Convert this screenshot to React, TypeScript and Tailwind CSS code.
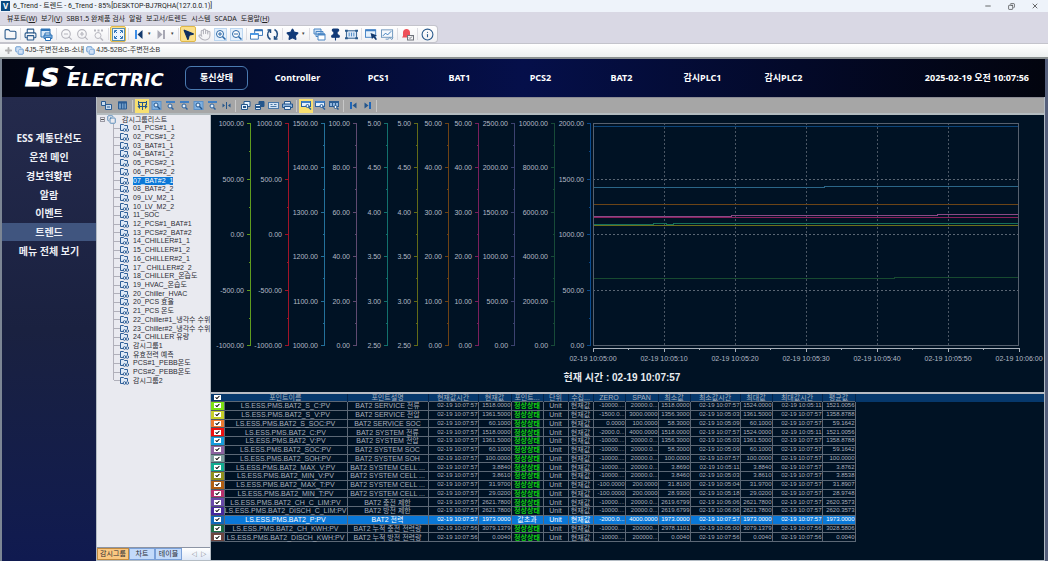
import { Fragment } from "react";
import type { ComponentType } from "react";
import {
  Folder,
  Printer,
  ZoomIn,
  ZoomOut,
  MousePointer2,
  Hand,
  Star,
  Pin,
  Info,
  Check,
  Copy,
  Minus,
  X,
  Plus,
} from "lucide-react";

type IconProps = { className?: string; strokeWidth?: number };

type Tool = {
  icon?: ComponentType<IconProps>;
  label: string;
  color?: string;
  active?: boolean;
  kind?: "sep" | "drop";
};

const ScreenPrintIcon = ({ className }: IconProps) => (
  <svg viewBox="0 0 13 13" className={className} fill="none" stroke="#2f74b8">
    <path d="M1 1h9v8H1z" fill="#d8e8f8" />
    <path d="M1 2h9" strokeWidth="2" />
    <path d="M5 7V5h5v2" fill="#fff" />
    <path d="M4 7h8v3.5H4z" fill="#7fb0e0" />
    <path d="M5.500 9.500h5v3h-5z" fill="#fff" />
  </svg>
);

const PanZoomIcon = ({ className }: IconProps) => (
  <svg viewBox="0 0 13 13" className={className} fill="none" stroke="#b8b8c0">
    <path d="M2 2.500h2M5.500 2.500h2M9 2.500h2" strokeWidth="2" />
    <circle cx="6" cy="7.500" r="3" />
    <path d="M8.500 10l2.500 2.500" strokeWidth="1.500" />
  </svg>
);

const FitIcon = ({ className }: IconProps) => (
  <svg viewBox="0 0 13 13" className={className} fill="none" stroke="#2f74b8">
    <rect x="0.500" y="0.500" width="12" height="12" fill="#eef6ff" stroke="#5a90b0" />
    <path d="M2.500 5V2.500H5M8 2.500h2.500V5M10.500 8v2.500H8M5 10.500H2.500V8M3 3l2 2M10 3L8 5M10 10L8 8M3 10l2-2" />
  </svg>
);

const BackIcon = ({ className }: IconProps) => (
  <svg viewBox="0 0 13 13" className={className}>
    <path d="M3 2h2v9H3z" fill="#3f8fe8" />
    <path d="M10.500 2v9L5.500 6.500z" fill="#12386c" />
  </svg>
);

const ForwardIcon = ({ className }: IconProps) => (
  <svg viewBox="0 0 13 13" className={className} fill="currentColor">
    <path d="M8 2h2v9H8z" />
    <path d="M2.500 2v9L7.500 6.500z" />
  </svg>
);

const ZoomInBoxIcon = ({ className }: IconProps) => (
  <svg viewBox="0 0 13 13" className={className} fill="none" stroke="#2a68a8">
    <rect x="0.500" y="0.500" width="12" height="12" fill="#e4f0fc" stroke="#bcd6f0" />
    <circle cx="6" cy="6" r="3.500" fill="#fff" />
    <path d="M8.500 8.500l3 3" strokeWidth="1.500" />
    <path d="M4 6h4M6 4v4" />
  </svg>
);

const ZoomOutBoxIcon = ({ className }: IconProps) => (
  <svg viewBox="0 0 13 13" className={className} fill="none" stroke="#2a68a8">
    <rect x="0.500" y="0.500" width="12" height="12" fill="#e4f0fc" stroke="#bcd6f0" />
    <circle cx="6" cy="6" r="3.500" fill="#fff" />
    <path d="M8.500 8.500l3 3" strokeWidth="1.500" />
    <path d="M4 6h4" />
  </svg>
);

const CascadeIcon = ({ className }: IconProps) => (
  <svg viewBox="0 0 14 13" className={className} fill="#fff" stroke="#2f6fb4">
    <path d="M5 1.500h8.500v6H5z" />
    <path d="M5 2h8.500" strokeWidth="2" />
    <path d="M0.500 5.500H9v6H.5z" />
    <path d="M.5 6H9" strokeWidth="2" stroke="#4a9ae8" />
  </svg>
);

const CycleIcon = ({ className }: IconProps) => (
  <svg viewBox="0 0 13 13" className={className} fill="none" stroke="#1f4c80" strokeWidth="1.500">
    <path d="M4.500 11.500C1 9.500.5 5 4 2M8.500 1.500C12 3.500 12.500 8 9 11" />
    <path d="M1.500 2H4.500v3M11.500 11h-3V8" />
  </svg>
);

const StackIcon = ({ className }: IconProps) => (
  <svg viewBox="0 0 13 13" className={className} fill="#cfe2f6" stroke="#4a86c4">
    <path d="M1 1h7v5H1zM3 3.500h7v5H3z" />
    <path d="M5 6h7v6H5z" fill="#fff" />
    <path d="M5 6.500h7" strokeWidth="2" />
  </svg>
);

const FrameIcon = ({ className }: IconProps) => (
  <svg viewBox="0 0 14 13" className={className} fill="none" stroke="#2a5a8c">
    <rect x="1.500" y="2.500" width="11" height="8" fill="#dbe8f6" />
    <path d="M4.500 4.500v4M7 4.500v4M9.500 4.500v4" stroke="#4a86c4" />
    <path d="M0 2.500h3M11 2.500h3M0 10.500h3M11 10.500h3" strokeWidth="2" />
  </svg>
);

const ScreenCursorIcon = ({ className }: IconProps) => (
  <svg viewBox="0 0 14 13" className={className} fill="none" stroke="#3f7fc4">
    <rect x="0.500" y="1.500" width="11" height="8" fill="#e4f0fc" />
    <path d="M.5 2h11" strokeWidth="2" />
    <path d="M6 5l7 2.500-2.500 1 2.500 3-1.500 1-2.500-3-1.500 2z" fill="#12386c" stroke="none" />
  </svg>
);

const ChartScreenIcon = ({ className }: IconProps) => (
  <svg viewBox="0 0 14 13" className={className} fill="none" stroke="#6a94bc">
    <rect x="0.500" y="1.500" width="12" height="8" fill="#f4f8fc" />
    <path d="M2 8l3-3 2 2 4-4" stroke="#2f74b8" />
    <path d="M5 11.500h3l1.500-2 2 2.500L13 10" />
  </svg>
);

const AlarmIcon = ({ className }: IconProps) => (
  <svg viewBox="0 0 13 13" className={className} fill="none">
    <path d="M1 9.500L2 8V4.500C2 2.500 3.500 1 5.500 1S9 2.500 9 4.500V8l1 1.500z" fill="#ee5058" />
    <rect x="6.500" y="7.500" width="6" height="4.500" fill="#f4f4f6" stroke="#70747c" />
    <path d="M8 9.500l1 1 2-2" stroke="#70747c" />
  </svg>
);

// 11px glyphs of the trend toolbar
const PanelsIcon = ({ className }: IconProps) => (
  <svg viewBox="0 0 11 9" className={className} fill="#c8dcf0" stroke="#2a5c94">
    <path d="M.5.5h4v4h-4zM4.500 3.500h6v5h-6z" />
    <path d="M6 6h3" />
  </svg>
);

const GridIcon = ({ className }: IconProps) => (
  <svg viewBox="0 0 11 9" className={className} fill="#6f9cc8" stroke="#2a5c94">
    <path d="M1.500 1h8v7h-8z" />
    <path d="M1 1.500h9" strokeWidth="2" />
    <path d="M4.500 2v6M7 2v6" />
  </svg>
);

const SpreadIcon = ({ className }: IconProps) => (
  <svg viewBox="0 0 11 9" className={className} fill="#24568c" stroke="#24568c">
    <path d="M1.500 0v4M9.500 0v4M5.500 1v8M2 5.500h7M1.500 1.500h8" />
    <path d="M3 3v5L.5 5.500zM8 3v5l2.500-2.500z" stroke="none" />
  </svg>
);

const LensSheetIcon = ({ className }: IconProps) => (
  <svg viewBox="0 0 11 9" className={className} fill="#e4f0fc" stroke="#24568c">
    <rect x="1" y="0.500" width="9" height="8" fill="#7fb0e0" stroke="#5a90c8" />
    <circle cx="5" cy="4" r="2" />
    <path d="M6.500 5.500L9 8" strokeWidth="1.500" />
  </svg>
);

const LensTopIcon = ({ className }: IconProps) => (
  <svg viewBox="0 0 11 9" className={className} fill="#e4f0fc" stroke="#2a62a0">
    <path d="M1 1h9" strokeWidth="2" stroke="#3f7fc4" />
    <circle cx="5" cy="5" r="2" />
    <path d="M6.500 6.500L8.500 8.500" strokeWidth="1.500" />
  </svg>
);

const CompressIcon = ({ className }: IconProps) => (
  <svg viewBox="0 0 11 9" className={className} fill="#24568c" stroke="#24568c">
    <path d="M5.500 1v7" />
    <path d="M1.500 2.500v4L4 4.500zM9.500 2.500v4L7 4.500z" stroke="none" />
  </svg>
);

const SheetsIcon = ({ className }: IconProps) => (
  <svg viewBox="0 0 11 9" className={className} fill="#e4f0fc" stroke="#24568c">
    <path d="M4 .5h6v5H4z" />
    <path d="M1.500 3.500h6v5h-6z" />
    <path d="M3 6h3" strokeWidth="2" />
  </svg>
);

const SaveSheetsIcon = ({ className }: IconProps) => (
  <svg viewBox="0 0 11 9" className={className} fill="#e4f0fc" stroke="#24568c">
    <path d="M5 .5h5v5H5z" fill="#24568c" />
    <path d="M1.500 3.500h5v5h-5z" />
    <path d="M2 6h4" strokeWidth="2" />
  </svg>
);

const CardIcon = ({ className }: IconProps) => (
  <svg viewBox="0 0 11 9" className={className} fill="#d4e4f4" stroke="#4a78a8">
    <rect x="0.500" y="1.500" width="10" height="6" />
    <path d="M2.500 3.500h2M6 3.500h2.500M2.500 5.500h6" />
  </svg>
);

const SmallPrintIcon = ({ className }: IconProps) => (
  <svg viewBox="0 0 11 9" className={className} fill="#e4f0fc" stroke="#24568c">
    <path d="M2.500 3V.5h6V3" />
    <path d="M.5 3h10v3.500H.5z" fill="#8fb4dc" />
    <path d="M2.500 5.500h6v3h-6z" />
  </svg>
);

const ScreenLensIcon = ({ className }: IconProps) => (
  <svg viewBox="0 0 11 9" className={className} fill="#e4f0fc" stroke="#2a62a0">
    <rect x="0.500" y="0.500" width="9" height="5" />
    <path d="M.5 1h9" strokeWidth="2" stroke="#3f7fc4" />
    <circle cx="6.500" cy="5" r="1.500" />
    <path d="M7.500 6l2.500 2.500" strokeWidth="1.500" />
  </svg>
);

const GridLensIcon = ({ className }: IconProps) => (
  <svg viewBox="0 0 11 9" className={className} fill="#8fb4dc" stroke="#2a5c94">
    <rect x="0.500" y="0.500" width="9" height="5" />
    <path d="M.5 1h9" strokeWidth="2" />
    <path d="M3.500 1v4M6.500 1v4" />
    <circle cx="6.500" cy="6" r="1.500" fill="#fff" />
    <path d="M8 7l1.500 1.500" strokeWidth="1.500" />
  </svg>
);

const FirstIcon = ({ className }: IconProps) => (
  <svg viewBox="0 0 11 9" className={className} fill="#1f66b8">
    <path d="M2 1h2v7H2z" />
    <path d="M8.500 1.500v6L4.500 4.500z" fill="#24568c" />
  </svg>
);

const LastIcon = ({ className }: IconProps) => (
  <svg viewBox="0 0 11 9" className={className} fill="#1f66b8">
    <path d="M7 1h2v7H7z" />
    <path d="M2.500 1.500v6l4-3z" fill="#24568c" />
  </svg>
);

const SEP: Tool = { label: "", kind: "sep" };
const DROP: Tool = { label: "more", kind: "drop" };

const mainTools: Tool[] = [
  { icon: Folder, label: "Open" },
  SEP,
  { icon: Printer, label: "Print" },
  { icon: ScreenPrintIcon, label: "Print screen" },
  SEP,
  { icon: ZoomOut, label: "Zoom out", color: "text-[#b4b4bc]" },
  { icon: ZoomIn, label: "Zoom in", color: "text-[#b4b4bc]" },
  { icon: PanZoomIcon, label: "Zoom reset" },
  SEP,
  { icon: FitIcon, label: "Fit", active: true },
  SEP,
  { icon: BackIcon, label: "Previous" },
  DROP,
  { icon: ForwardIcon, label: "Next", color: "text-[#a8a8b4]" },
  DROP,
  SEP,
  {
    icon: MousePointer2,
    label: "Select",
    color: "text-[#0f2f5f] fill-[#0f2f5f]",
    active: true,
  },
  { icon: Hand, label: "Pan", color: "text-[#b4b4bc]" },
  { icon: ZoomInBoxIcon, label: "Zoom in area" },
  { icon: ZoomOutBoxIcon, label: "Zoom out area" },
  SEP,
  { icon: CascadeIcon, label: "Windows" },
  { icon: CycleIcon, label: "Refresh" },
  SEP,
  { icon: Star, label: "Favorites", color: "text-[#123a78] fill-[#123a78]" },
  DROP,
  SEP,
  { icon: StackIcon, label: "Layers" },
  { icon: Pin, label: "Pin", color: "text-[#123a78] fill-[#123a78]" },
  { icon: FrameIcon, label: "Frame" },
  SEP,
  { icon: ScreenCursorIcon, label: "Screen" },
  { icon: ChartScreenIcon, label: "Chart" },
  SEP,
  { icon: AlarmIcon, label: "Alarm" },
  SEP,
  { icon: Info, label: "About" },
];

const trendTools: Tool[] = [
  { icon: PanelsIcon, label: "Layout" },
  { icon: GridIcon, label: "Table" },
  SEP,
  { icon: SpreadIcon, label: "Move", active: true },
  { icon: LensSheetIcon, label: "Zoom area" },
  { icon: LensTopIcon, label: "Zoom all" },
  { icon: LensTopIcon, label: "Zoom X" },
  { icon: LensSheetIcon, label: "Zoom Y" },
  { icon: LensTopIcon, label: "Zoom back" },
  { icon: CompressIcon, label: "Fit width" },
  SEP,
  { icon: SheetsIcon, label: "Load" },
  { icon: SaveSheetsIcon, label: "Save" },
  { icon: CardIcon, label: "Export" },
  { icon: SmallPrintIcon, label: "Print trend" },
  SEP,
  { icon: ScreenLensIcon, label: "Realtime", active: true },
  { icon: ScreenLensIcon, label: "History" },
  { icon: GridLensIcon, label: "Compare" },
  SEP,
  { icon: FirstIcon, label: "First" },
  { icon: LastIcon, label: "Last" },
  SEP,
];

const menus = [
  ["뷰포트", "W"],
  ["보기", "V"],
  ["SBB1.5 완제품 검사"],
  ["알람"],
  ["보고서/트렌드"],
  ["시스템"],
  ["SCADA"],
  ["도움말", "H"],
];

const headerTabs = [
  "통신상태",
  "Controller",
  "PCS1",
  "BAT1",
  "PCS2",
  "BAT2",
  "감시PLC1",
  "감시PLC2",
];

const sideItems = [
  "ESS 계통단선도",
  "운전 메인",
  "경보현황판",
  "알람",
  "이벤트",
  "트렌드",
  "메뉴 전체 보기",
];

const groups = [
  "01_PCS#1_1",
  "02_PCS#1_2",
  "03_BAT#1_1",
  "04_BAT#1_2",
  "05_PCS#2_1",
  "06_PCS#2_2",
  "07_BAT#2_1",
  "08_BAT#2_2",
  "09_LV_M2_1",
  "10_LV_M2_2",
  "11_SOC",
  "12_PCS#1_BAT#1",
  "13_PCS#2_BAT#2",
  "14_CHILLER#1_1",
  "15_CHILLER#1_2",
  "16_CHILLER#2_1",
  "17_ CHILLER#2_2",
  "18_CHILLER_온습도",
  "19_HVAC_온습도",
  "20_Chiller_HVAC",
  "20_PCS 효율",
  "21_PCS 온도",
  "22_Chiller#1_냉각수 수위",
  "23_Chiller#2_냉각수 수위",
  "24_CHILLER 유량",
  "감시그룹1",
  "유효전력 예측",
  "PCS#1_PEBB온도",
  "PCS#2_PEBB온도",
  "감시그룹2",
];

const axes = [
  { x: 39, color: "#5f9c1e", ticks: ["1000.00", "500.00", "0.00", "-500.00", "-1000.00"] },
  { x: 77, color: "#a01428", ticks: ["1000.00", "500.00", "0.00", "-500.00", "-1000.00"] },
  { x: 113, color: "#23709a", ticks: ["1500.00", "1400.00", "1300.00", "1200.00", "1100.00", "1000.00"] },
  { x: 145, color: "#5f4a70", ticks: ["100.00", "80.00", "60.00", "40.00", "20.00", "0.00"] },
  { x: 176, color: "#12706c", ticks: ["5.00", "4.50", "4.00", "3.50", "3.00", "2.50"] },
  { x: 206, color: "#626a18", ticks: ["5.00", "4.50", "4.00", "3.50", "3.00", "2.50"] },
  { x: 237, color: "#6e4214", ticks: ["50.00", "40.00", "30.00", "20.00", "10.00", "0.00"] },
  { x: 267, color: "#7a1f5c", ticks: ["50.00", "40.00", "30.00", "20.00", "10.00", "0.00"] },
  { x: 303, color: "#3c4270", ticks: ["2500.00", "2000.00", "1500.00", "1000.00", "500.00", "0.00"] },
  { x: 343, color: "#174a38", ticks: ["10000.00", "8000.00", "6000.00", "4000.00", "2000.00", "0.00"] },
  { x: 379, color: "#0a4a8c", ticks: ["2000.00", "1500.00", "1000.00", "500.00", "0.00"] },
];

const series = [
  { color: "#0c4478", points: "382,11 808,11" },
  { color: "#2b6688", points: "382,72 613,72 614,71 808,71" },
  { color: "#6b4417", points: "382,89 808,89" },
  { color: "#8a4a86", points: "382,101 520,101 521,100 726,100 727,99 808,99" },
  { color: "#8a1f5c", points: "382,102 808,102" },
  { color: "#15705c", points: "382,109 442,109 443,108 455,108 456,109 462,109 463,108 808,108" },
  { color: "#6c701c", points: "382,110 808,110" },
  { color: "#174a30", points: "382,163 683,163 684,162 808,162" },
];

const times = [
  "02-19 10:05:00",
  "02-19 10:05:10",
  "02-19 10:05:20",
  "02-19 10:05:30",
  "02-19 10:05:40",
  "02-19 10:05:50",
  "02-19 10:06:00",
];

const TOP = 8;
const BOTTOM = 230;
const LEFT = 382;
const RIGHT = 808;

const columns = [
  { name: "포인트이름", className: "w-[123px] text-center text-[7px]" },
  { name: "포인트설명", className: "w-[81px] text-center text-[7px]" },
  { name: "현재값시간", className: "w-[50px] text-right text-[6px]" },
  { name: "현재값", className: "w-[33px] text-right text-[6px]" },
  { name: "포인트...", className: "w-[32px] text-center text-[7px]" },
  { name: "단위", className: "w-[25px] text-center text-[7px]" },
  { name: "수집...", className: "w-[25px] text-center text-[7px]" },
  { name: "ZERO", className: "w-[32px] text-right text-[6px]" },
  { name: "SPAN", className: "w-[33px] text-right text-[6px]" },
  { name: "최소값", className: "w-[32px] text-right text-[6px]" },
  { name: "최소값시간", className: "w-[50px] text-right text-[6px]" },
  { name: "최대값", className: "w-[32px] text-right text-[6px]" },
  { name: "최대값시간", className: "w-[50px] text-right text-[6px]" },
  { name: "평균값", className: "w-[33px] text-right text-[6px]" },
];

const T = "02-19 10:07:57";
const OK = "정상상태";

const rows = [
  { color: "bg-[#7be012]", cells: ["LS.ESS.PMS.BAT2_S_C:PV", "BAT2 SERVICE 전류", T, "1518.0000", OK, "-10000....", "20000.0...", "1518.0000", T, "1524.0000", "02-19 10:05:11", "1521.0056"] },
  { color: "bg-[#c6ce28]", cells: ["LS.ESS.PMS.BAT2_S_V:PV", "BAT2 SERVICE 전압", T, "1361.5000", OK, "-1500.0...", "3000.0000", "1356.3000", "02-19 10:05:03", "1361.5000", T, "1358.8788"] },
  { color: "bg-[#ec7a30]", cells: ["LS.ESS.PMS.BAT2_S_SOC:PV", "BAT2 SERVICE SOC", T, "60.1000", OK, "0.0000", "100.0000", "58.3000", "02-19 10:05:09", "60.1000", T, "59.1642"] },
  { color: "bg-[#ee1010]", cells: ["LS.ESS.PMS.BAT2_C:PV", "BAT2 SYSTEM 전류", T, "1518.0000", OK, "-2000.0...", "4000.0000", "1518.0000", T, "1524.0000", "02-19 10:05:11", "1521.0056"] },
  { color: "bg-[#149cdc]", cells: ["LS.ESS.PMS.BAT2_V:PV", "BAT2 SYSTEM 전압", T, "1361.5000", OK, "-10000....", "20000.0...", "1356.3000", "02-19 10:05:03", "1361.5000", T, "1358.8788"] },
  { color: "bg-[#8c62a0]", cells: ["LS.ESS.PMS.BAT2_SOC:PV", "BAT2 SYSTEM SOC", T, "60.1000", OK, "-10000....", "20000.0...", "58.3000", "02-19 10:05:09", "60.1000", T, "59.1642"] },
  { color: "bg-[#7c9c9c]", cells: ["LS.ESS.PMS.BAT2_SOH:PV", "BAT2 SYSTEM SOH", T, "100.0000", OK, "-10000....", "20000.0...", "100.0000", T, "100.0000", T, "100.0000"] },
  { color: "bg-[#12ac90]", cells: ["LS.ESS.PMS.BAT2_MAX_V:PV", "BAT2 SYSTEM CELL ...", T, "3.8840", OK, "-10000....", "20000.0...", "3.8690", "02-19 10:05:11", "3.8840", T, "3.8762"] },
  { color: "bg-[#90901c]", cells: ["LS.ESS.PMS.BAT2_MIN_V:PV", "BAT2 SYSTEM CELL ...", T, "3.8610", OK, "-10000....", "20000.0...", "3.8460", "02-19 10:05:03", "3.8610", T, "3.8538"] },
  { color: "bg-[#b05e12]", cells: ["LS.ESS.PMS.BAT2_MAX_T:PV", "BAT2 SYSTEM CELL ...", T, "31.9700", OK, "-100.0000", "200.0000", "31.8100", "02-19 10:05:04", "31.9700", T, "31.8907"] },
  { color: "bg-[#b8306c]", cells: ["LS.ESS.PMS.BAT2_MIN_T:PV", "BAT2 SYSTEM CELL ...", T, "29.0200", OK, "-100.0000", "200.0000", "28.9300", "02-19 10:05:18", "29.0200", T, "28.9748"] },
  { color: "bg-[#6848a8]", cells: ["LS.ESS.PMS.BAT2_CH_C_LIM:PV", "BAT2 충전 제한", T, "2621.7800", OK, "-10000....", "20000.0...", "2619.6799", "02-19 10:06:06", "2621.7800", T, "2620.3573"] },
  { color: "bg-[#46289c]", cells: ["LS.ESS.PMS.BAT2_DISCH_C_LIM:PV", "BAT2 방전 제한", T, "2621.7800", OK, "-10000....", "20000.0...", "2619.6799", "02-19 10:06:06", "2621.7800", T, "2620.3573"] },
  { color: "bg-[#1068b8]", cells: ["LS.ESS.PMS.BAT2_P:PV", "BAT2 전력", T, "1973.0000", "값초과", "-2000.0...", "4000.0000", "1973.0000", T, "1973.0000", T, "1973.0000"] },
  { color: "bg-[#1c6c44]", cells: ["LS.ESS.PMS.BAT2_CH_KWH:PV", "BAT2 누적 충전 전력량", "02-19 10:07:56", "3079.1379", OK, "-10000....", "200000...", "2978.1101", "02-19 10:05:00", "3079.1379", "02-19 10:07:56", "3028.5806"] },
  { color: "bg-[#6c4640]", cells: ["LS.ESS.PMS.BAT2_DISCH_KWH:PV", "BAT2 누적 방전 전력량", "02-19 10:07:56", "0.0040", OK, "-10000....", "200000...", "0.0040", "02-19 10:07:56", "0.0040", "02-19 10:07:56", "0.0040"] },
];

const MainToolbar = () => (
  <div className="flex h-[18px] bg-[#d9d8e4]">
    <div className="flex items-center rounded-r-sm border border-l-0 border-[#c4c4cc] bg-gradient-to-b from-white to-[#f0f0f3] px-[2px]">
      {mainTools.map((tool, i) => {
        if (tool.kind === "sep")
          return (
            <span key={i} className="flex w-1 justify-center">
              <span className="h-3 w-px bg-[#dcdce2]" />
            </span>
          );
        if (tool.kind === "drop")
          return (
            <button key={i} aria-label={tool.label} className="w-[7px] text-center text-[5px] text-[#444]">
              ▾
            </button>
          );
        const Icon = tool.icon!;
        return (
          <button
            key={i}
            aria-label={tool.label}
            className={`flex h-4 w-4 items-center justify-center ${
              tool.active ? "rounded-xs border border-[#e0b848] bg-[#fbe08a]" : ""
            }`}
          >
            <Icon className={`h-[13px] w-[13px] shrink-0 ${tool.color ?? "text-[#2a5a8c]"}`} strokeWidth={2} />
          </button>
        );
      })}
    </div>
  </div>
);

const TrendToolbar = () => (
  <div className="flex h-4 items-center border-t border-[#8c8c94] bg-[#a6a6a6] pl-px">
    {trendTools.map((tool, i) => {
      if (tool.kind === "sep")
        return (
          <span key={i} className="flex w-[5px] justify-center">
            <span className="h-3 w-px bg-[#c8c8c8]" />
          </span>
        );
      const Icon = tool.icon!;
      return (
        <button
          key={i}
          aria-label={tool.label}
          className={`flex h-[14px] items-center justify-center ${i < 2 ? "w-4" : "w-[14px]"} ${
            tool.active ? "bg-[#f8e070]" : ""
          }`}
        >
          <Icon className="h-[9px] w-[11px]" />
        </button>
      );
    })}
  </div>
);

const Logo = () => (
  <svg
    viewBox="0 0 150 30"
    className="h-[30px] w-[150px]"
    fill="#fff"
    fontFamily="DejaVu Sans, sans-serif"
    fontWeight="bold"
    fontStyle="italic"
    role="img"
    aria-label="LS ELECTRIC"
  >
    <text x="1" y="23" fontSize="25" stroke="#fff" strokeWidth="1">
      LS
    </text>
    <path d="M39 3h12l-4 4z" />
    <text x="43" y="23" fontSize="20">
      E<tspan fontSize="18">LECTRIC</tspan>
    </text>
  </svg>
);

const Header = () => (
  <header className="flex h-[38px] items-center bg-gradient-to-r from-[#020512] via-[#050f4a] to-[#02040e] text-[9px] font-bold text-white">
    <div className="w-[174px] pl-[22px]">
      <Logo />
    </div>
    <nav className="flex grow">
      {headerTabs.map((tab, i) => (
        <div key={tab} className="flex w-[81px] justify-center">
          <button
            className={`h-6 w-[63px] ${i === 0 ? "rounded-md border border-[#4a7ab0] bg-[#040d30]" : ""}`}
          >
            {tab}
          </button>
        </div>
      ))}
    </nav>
    <time className="pr-4">2025-02-19 오전 10:07:56</time>
  </header>
);

const SideNav = () => (
  <nav className="w-[94px] shrink-0 bg-gradient-to-b from-[#242a4c] via-[#1a2140] to-[#101a50] pt-8">
    <ul className="flex h-[131px] flex-col">
      {sideItems.map((item) => (
        <li key={item} className="flex flex-1">
          <button
            className={`grow text-[10px] leading-[12px] font-bold text-[#eef0f6] ${
              item === "트렌드" ? "bg-[#40557f]" : ""
            }`}
          >
            {item}
          </button>
        </li>
      ))}
    </ul>
  </nav>
);

const GroupIcon = () => (
  <svg viewBox="0 0 9 8" className="h-2 w-[9px] shrink-0" fill="none" stroke="#2f5f98">
    <path d="M4 6.5H.5v-6h3l1 1h3V4" fill="#dfe9f6" />
    <circle cx="4.5" cy="6" r="1.3" fill="#fff" />
    <circle cx="7.3" cy="6" r="1.3" fill="#fff" />
  </svg>
);

const GroupTree = () => (
  <aside className="flex w-[113px] shrink-0 flex-col bg-[#e9eaf0] font-['Liberation_Sans','Noto_Sans_CJK_KR',sans-serif] text-[7px] leading-[8px] text-[#2c2c34]">
    <ul className="flex h-[270px] flex-col">
      <li className="flex flex-1 items-center gap-[2px] pl-[3px]">
        <button aria-label="collapse" className="flex h-[5px] w-[5px] items-center border border-[#9a9aa4]">
          <span className="h-px w-full bg-[#555]" />
        </button>
        <Copy className="h-[9px] w-[9px] text-[#2f6fa8]" strokeWidth={2} />
        <span className="pl-1">감시그룹리스트</span>
      </li>
      {groups.map((group, i) => (
        <li key={group} className="flex flex-1 items-stretch pl-4 whitespace-nowrap">
          <span className={`w-px shrink-0 bg-[#b0b0ba] ${i === groups.length - 1 ? "h-1" : ""}`} />
          <span className="flex items-center">
            <span className="h-px w-[6px] shrink-0 bg-[#b0b0ba]" />
            <GroupIcon />
            <button
              className={`ml-1 text-left ${group === "07_BAT#2_1" ? "bg-[#0a78d8] text-white" : ""}`}
            >
              {group}
            </button>
          </span>
        </li>
      ))}
    </ul>
    <div className="mt-auto flex h-[13px] border-t border-[#8c94a4] bg-gradient-to-b from-white to-[#dfe8f6]">
      <button className="w-8 border border-[#c08a40] bg-[#fbc780]">감시그룹</button>
      <button className="w-[26px] border border-[#7aa0d8] bg-[#c3dafa]">차트</button>
      <button className="w-[27px] border border-[#7aa0d8] bg-[#c3dafa]">테이블</button>
      <button aria-label="previous tab" className="ml-2 w-[9px] text-[6px]">
        ◁
      </button>
      <button aria-label="next tab" className="w-[9px] text-[6px]">
        ▷
      </button>
    </div>
  </aside>
);

const TrendChart = () => (
  <svg
    viewBox="0 0 833 277"
    className="block h-auto w-full bg-[#001224] font-['Liberation_Sans','Noto_Sans_CJK_KR',sans-serif]"
    fontSize="7"
    fill="#b4bac4"
    shapeRendering="crispEdges"
  >
    {axes.map(({ x, color, ticks }) => {
      const step = (BOTTOM - TOP) / (ticks.length - 1);
      return (
        <g key={x}>
          <path d={`M${x}.5 ${TOP}V${BOTTOM}`} stroke={color} />
          {ticks.map((tick, i) => {
            const y = Math.round(TOP + i * step);
            const half = Math.round(y + step / 2);
            return (
              <g key={tick}>
                <path d={`M${x - 3} ${y}.5h4`} stroke={color} />
                {i < ticks.length - 1 && <path d={`M${x - 1} ${half}.5h2`} stroke={color} />}
                <text x={x - 6} y={y + 3} textAnchor="end">
                  {tick}
                </text>
              </g>
            );
          })}
        </g>
      );
    })}

    {[64, 119, 175].map((y) => (
      <path key={y} d={`M${LEFT} ${y}.5H${RIGHT}`} stroke="#5a6674" strokeDasharray="2 2" />
    ))}
    {[453, 524, 595, 666, 737].map((x) => (
      <path key={x} d={`M${x}.5 ${TOP}V${BOTTOM}`} stroke="#4a5664" strokeDasharray="2 2" />
    ))}
    {series.map(({ color, points }) => (
      <polyline key={color} points={points} fill="none" stroke={color} transform="translate(0 .5)" />
    ))}
    <rect x={LEFT + 0.5} y={TOP + 0.5} width={RIGHT - LEFT - 1} height={BOTTOM - TOP} fill="none" stroke="#56606e" />

    <path d={`M${LEFT} 233.5H${RIGHT}`} stroke="#a8b0ba" />
    {times.map((time, i) => {
      const x = LEFT + i * 71;
      return (
        <Fragment key={time}>
          <path d={`M${x}.5 233v4`} stroke="#a8b0ba" />
          {i < 6 && <path d={`M${x + 35}.5 233v2`} stroke="#a8b0ba" />}
          <text x={x} y="246" textAnchor="middle">
            {time}
          </text>
        </Fragment>
      );
    })}
    <text x="411" y="266" textAnchor="middle" fontSize="10" fontWeight="bold" fill="#e8ecf0">
      현재 시간 : 02-19 10:07:57
    </text>
  </svg>
);

const PointCheck = ({ label }: { label: string }) => (
  <span className="relative mx-auto block h-[5px] w-[7px]">
    <input
      type="checkbox"
      defaultChecked
      aria-label={label}
      className="block h-[5px] w-[7px] appearance-none bg-white"
    />
    <Check className="pointer-events-none absolute top-0 left-px h-[5px] w-[5px] text-black" strokeWidth={5} />
  </span>
);

const PointTable = () => (
  <div className="grow border-t-2 border-[#b8bcc4] bg-[#001224]">
    <table className="h-[148px] w-full table-fixed border-collapse font-['Liberation_Sans','Noto_Sans_CJK_KR',sans-serif] leading-[7px] whitespace-nowrap text-[#a8b0bc]">
      <thead>
        <tr className="bg-[#06386c]">
          <th className="w-[13px] p-0">
            <PointCheck label="전체 선택" />
          </th>
          {columns.map(({ name, className }) => (
            <th
              key={name}
              className={`border-r border-[#04244a] p-0 font-normal ${className} text-center! text-[7px]!`}
            >
              {name}
            </th>
          ))}
          <th className="p-0" />
        </tr>
      </thead>
      <tbody>
        {rows.map(({ color, cells }) => {
          const selected = cells[4] !== OK;
          const values = [...cells.slice(0, 5), "Unit", "현재값", ...cells.slice(5)];
          return (
            <tr key={cells[0]} className={selected ? "bg-[#0a78d8] text-white" : ""}>
              <td className={`border-y border-[#4c5866] p-0 ${color}`}>
                <PointCheck label={cells[0]} />
              </td>
              {values.map((value, i) => (
                <td
                  key={columns[i].name}
                  className={`border border-[#5c6876] p-0 ${columns[i].className} ${
                    value === OK ? "font-bold text-[#10d010]" : ""
                  }`}
                >
                  {value}
                </td>
              ))}
              <td className="bg-[#001224] p-0" />
            </tr>
          );
        })}
      </tbody>
    </table>
  </div>
);

const App = () => {
  return (
    <div className="flex min-h-screen flex-col bg-[#001224] font-['Noto_Sans','Noto_Sans_CJK_KR',sans-serif]">
      <div className="flex h-3 items-center bg-[#eef3fa] text-[7px] leading-[12px] text-[#222]">
        <span className="ml-px flex h-[10px] w-[9px] items-center justify-center bg-[#0c4a80] text-[8px] font-bold text-white">
          V
        </span>
        <span className="grow pl-[3px] font-[Roboto,'Noto_Sans_CJK_KR',sans-serif]">
          6_Trend - 트렌드 - 6_Trend - 85%[DESKTOP-BJ7RQHA(127.0.0.1)]
        </span>
        <div className="flex gap-4 pr-[9px]">
          <button aria-label="minimize">
            <Minus className="h-2 w-2" />
          </button>
          <button aria-label="restore">
            <Copy className="h-[7px] w-[7px] -scale-x-100" />
          </button>
          <button aria-label="close">
            <X className="h-2 w-2" />
          </button>
        </div>
      </div>

      <div className="flex h-[13px] items-center gap-1 bg-[#d9d8e4] pl-[7px] text-[7px] leading-[10px] text-[#222]">
        {menus.map(([name, key]) => (
          <button key={name}>
            {name}
            {key && (
              <>
                (<u>{key}</u>)
              </>
            )}
          </button>
        ))}
      </div>

      <MainToolbar />

      <div className="flex h-4 items-center gap-[2px] border-t border-b-2 border-t-[#c4c4cc] border-b-[#8a9090] bg-gradient-to-b from-white to-[#ecefef] pl-1 font-['Liberation_Sans','Noto_Sans_CJK_KR',sans-serif] text-[7px] text-[#333]">
        <Plus className="h-[9px] w-[9px] text-[#b0b0b0]" strokeWidth={5} />
        <button className="flex items-center gap-px">
          <Copy className="h-[9px] w-[9px] fill-[#cfe0f4] text-[#3f7fc4]" strokeWidth={2} />
          4J5-주변전소B-소내
        </button>
        <button className="flex items-center gap-px">
          <Copy className="h-[9px] w-[9px] fill-[#cfe0f4] text-[#3f7fc4]" strokeWidth={2} />
          4J5-52BC-주변전소B
        </button>
      </div>

      <div className="flex grow flex-col border-r-3 border-l-2 border-r-[#56607c] border-l-[#7c8694]">
        <Header />
        <div className="flex grow">
          <SideNav />
          <main className="flex min-w-0 grow flex-col border-x border-b border-[#b4bcc4]">
            <TrendToolbar />
            <div className="flex grow border-t-2 border-[#b4bcc0]">
              <GroupTree />
              <div className="flex min-w-0 grow flex-col border-l border-[#b4bcc4]">
                <TrendChart />
                <PointTable />
              </div>
            </div>
          </main>
        </div>
      </div>
    </div>
  );
};

export default App;
